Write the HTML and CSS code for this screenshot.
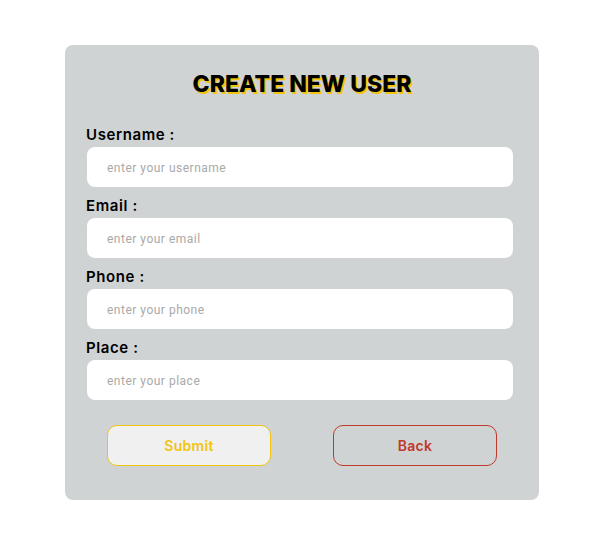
FILE: index.html
```html
<!DOCTYPE html>
<html>
<head>
<meta charset="utf-8">
<link rel="stylesheet" href="styles.css">
</head>
<body>
<form class="card">
  <h2 class="title">CREATE NEW USER</h2>
  <label class="label">Username :</label>
  <input class="input" type="text" placeholder="enter your username">
  <label class="label">Email :</label>
  <input class="input" type="text" placeholder="enter your email">
  <label class="label">Phone :</label>
  <input class="input" type="text" placeholder="enter your phone">
  <label class="label">Place :</label>
  <input class="input" type="text" placeholder="enter your place">
  <div class="actions">
    <button type="button" class="btn btn-submit">Submit</button>
    <button type="button" class="btn btn-back">Back</button>
  </div>
</form>
</body>
</html>
```
FILE: styles.css
```css
html, body {
  margin: 0;
  padding: 0;
  background: #ffffff;
}
body {
  padding-top: 45px;
}
.card {
  width: 474px;
  margin: 0 auto;
  background: #d0d3d4;
  border-radius: 8px;
  padding: 24px 0 35px;
  display: flex;
  flex-direction: column;
  box-sizing: border-box;
  height: 455px;
}
.title {
  margin: 0;
  height: 30px;
  line-height: 30px;
  text-align: center;
  font-family: "Inter", "DejaVu Sans", sans-serif;
  font-weight: 800;
  font-size: 23px;
  color: #000;
  text-shadow: 2px 2px 0 #f1c40f;
  letter-spacing: 0;
}
.label {
  display: block;
  margin: 6px 0 3px 21px;
  height: 22px;
  padding-top: 2px;
  box-sizing: border-box;
  line-height: 22px;
  font-family: "Inter", "DejaVu Sans", sans-serif;
  font-weight: 600;
  font-size: 15px;
  letter-spacing: 0.6px;
  color: #000;
}
.title + .label {
  margin-top: 23px;
}
.input {
  display: block;
  flex: none;
  margin: 0 0 0 22px;
  width: 426px;
  height: 40px;
  box-sizing: border-box;
  border: none;
  border-radius: 8px;
  background: #fff;
  padding: 2px 20px 0;
  font-family: "Roboto", "Liberation Sans", sans-serif;
  font-size: 12px;
  letter-spacing: 0.5px;
  outline: none;
}
.input::placeholder {
  color: #a9a9a9;
}
.actions {
  display: flex;
  justify-content: space-between;
  padding: 0 42px;
  margin-top: 25px;
}
.btn {
  width: 164px;
  height: 41px;
  border-radius: 10px;
  font-family: "Inter", "DejaVu Sans", sans-serif;
  font-weight: 600;
  font-size: 14px;
  letter-spacing: 0.3px;
  cursor: pointer;
}
.btn-submit {
  background: #f0f0f0;
  border: 1px solid #f1c40f;
  color: #f1c40f;
}
.btn-back {
  background: transparent;
  border: 1px solid #c0392b;
  color: #c0392b;
}
```
